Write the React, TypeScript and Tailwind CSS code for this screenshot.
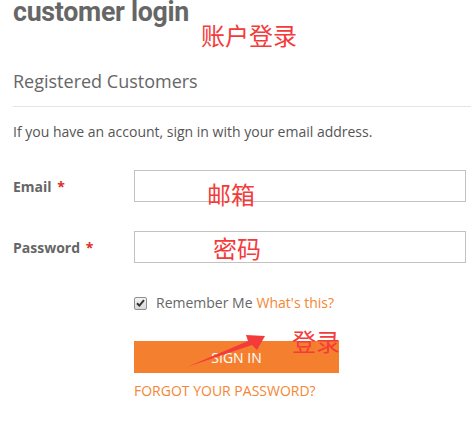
const note = 'absolute text-[24px] leading-none text-[#f43b3b] font-["Noto_Sans_CJK_SC",sans-serif]';

export default function App() {
  return (
    <div className='relative h-[438px] w-[471px] overflow-hidden bg-white pl-[13px] font-["Open_Sans",sans-serif] text-[#666]'>
      <h1 className='-mt-[2px] origin-left scale-x-[0.955] whitespace-nowrap font-["Roboto",sans-serif] text-[28px] font-bold leading-[28px] tracking-[-0.3px] text-[#666]'>
        customer login
      </h1>

      <div className="mt-[43px] border-b border-[#e4e4e4] pb-[13px]">
        <h2 className="text-[18px] font-normal leading-[24px] text-[#666]">Registered Customers</h2>
      </div>

      <p className="mt-[15px] text-[14px] leading-[20px] text-[#555]">
        If you have an account, sign in with your email address.
      </p>

      <div className="mt-[28px] flex flex-col gap-[29px]">
        <div className="flex items-center">
          <label className="w-[121px] text-[14px] font-bold text-[#666]">
            Email <span className="ml-[2px] text-[#e02b27]">*</span>
          </label>
          <input className="h-[32px] w-[332px] border border-[#c2c2c2] bg-white outline-none" />
        </div>
        <div className="flex items-center">
          <label className="w-[121px] text-[14px] font-bold text-[#666]">
            Password <span className="ml-[2px] text-[#e02b27]">*</span>
          </label>
          <input type="password" className="h-[32px] w-[332px] border border-[#c2c2c2] bg-white outline-none" />
        </div>
      </div>

      <div className="ml-[121px] mt-[30px] flex items-center text-[14px] leading-[20px]">
        <span className="flex h-[13px] w-[13px] items-center justify-center rounded-[2px] border border-[#8f8f8f] bg-gradient-to-b from-[#f4f4f4] to-[#d8d8d8]">
          <svg width="9" height="8" viewBox="0 0 9 8">
            <path d="M1 4.2 L3.4 6.6 L8 1.2" fill="none" stroke="#333" strokeWidth="2" />
          </svg>
        </span>
        <span className="ml-[9px] text-[#666]">Remember Me</span>
        <a className="ml-[4px] text-[#f58634]">What's this?</a>
      </div>

      <button className="ml-[121px] mt-[28px] flex h-[32px] w-[205px] items-center justify-center bg-[#f47f2f] text-[14px] uppercase text-white">
        Sign In
      </button>

      <a className="ml-[121px] mt-[8px] block text-[14px] uppercase leading-[20px] text-[#f58634]">
        Forgot Your Password?
      </a>

      <span className={`${note} left-[201px] top-[23px]`}>账户登录</span>
      <span className={`${note} left-[207px] top-[182px]`}>邮箱</span>
      <span className={`${note} left-[213px] top-[236px]`}>密码</span>
      <span className={`${note} left-[292px] top-[329px]`}>登录</span>

      <svg className="pointer-events-none absolute left-0 top-0" width="471" height="438">
        <polygon points="187,367 248,341 246,335 265,336 257,350 252,345" fill="#f43b3b" />
      </svg>
    </div>
  );
}
